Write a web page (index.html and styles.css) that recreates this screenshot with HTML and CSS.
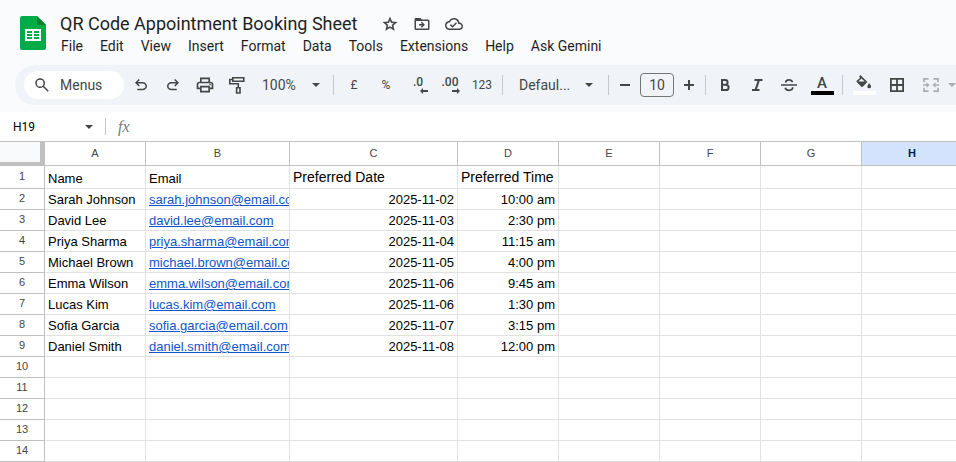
FILE: index.html
```html
<!DOCTYPE html>
<html lang="en">
<head>
    <meta charset="UTF-8">
    <meta name="viewport" content="width=device-width, initial-scale=1.0">
    <title>QR Code Appointment Booking Sheet</title>
    <link rel="stylesheet" href="styles.css">
</head>
<body>
    <header class="header">
        <svg class="logo" viewBox="0 0 26 34">
            <path fill="#00ac47" d="M2 0h15l9 9v23a2 2 0 0 1-2 2H2a2 2 0 0 1-2-2V2a2 2 0 0 1 2-2z"/>
            <path fill="#00832d" d="M17 0l9 9h-9z"/>
            <path fill="#fff" fill-rule="evenodd" d="M5 13h16v12H5zM7 15v2h5v-2zM14 15v2h5v-2zM7 18v2h5v-2zM14 18v2h5v-2zM7 21v2h5v-2zM14 21v2h5v-2z"/>
        </svg>
        <div class="header-text">
            <div class="title-row">
                <h1>QR Code Appointment Booking Sheet</h1>
                <button class="title-btn" aria-label="Star">
                    <svg viewBox="0 0 24 24"><path d="M8.900 16.800l3.100-1.900 3.100 1.900-.8-3.500 2.700-2.400-3.600-.3L12 7.200l-1.400 3.400-3.600.3 2.700 2.400zM5.800 21l1.600-7L2 9.200l7.200-.6L12 2l2.800 6.600 7.200.6-5.400 4.800 1.600 7-6.200-3.700z"/></svg>
                </button>
                <button class="title-btn" aria-label="Move">
                    <svg viewBox="0 0 24 24"><path d="M4 20a2 2 0 0 1-2-2V6c0-1.100.9-2 2-2h6l2 2h8a2 2 0 0 1 2 2v10a2 2 0 0 1-2 2zM4 18h16V8H4zM11.800 17l-1.400-1.400L12 14H8v-2h4l-1.600-1.600L11.800 9l4 4z"/></svg>
                </button>
                <button class="title-btn" aria-label="See document status">
                    <svg viewBox="0 0 24 24"><path d="M19.350 10.040A7.490 7.490 0 0 0 12 4C9.110 4 6.600 5.640 5.350 8.040A5.994 5.994 0 0 0 0 14c0 3.310 2.690 6 6 6h13c2.760 0 5-2.240 5-5 0-2.640-2.050-4.780-4.650-4.960zM19 18H6c-2.210 0-4-1.790-4-4s1.790-4 4-4h.710C7.370 7.690 9.480 6 12 6c3.040 0 5.500 2.460 5.500 5.500v.5H19c1.660 0 3 1.340 3 3s-1.340 3-3 3zM10 14.200l-2.100-2.100-1.400 1.400L10 17l6-6-1.400-1.400z"/></svg>
                </button>
            </div>
            <nav class="menu">
                <button>File</button>
                <button>Edit</button>
                <button>View</button>
                <button>Insert</button>
                <button>Format</button>
                <button>Data</button>
                <button>Tools</button>
                <button>Extensions</button>
                <button>Help</button>
                <button>Ask Gemini</button>
            </nav>
        </div>
    </header>

    <div class="toolbar">
        <label class="search">
            <svg viewBox="0 0 24 24"><path d="M19.600 21l-6.300-6.300A6.500 6.500 0 1 1 14.700 13.300L21 19.600zM9.500 14a4.500 4.500 0 1 0 0-9 4.500 4.500 0 0 0 0 9z"/></svg>
            <input type="text" placeholder="Menus" aria-label="Menus">
        </label>
        <button class="tool" aria-label="Undo">
            <svg class="small" viewBox="0 0 24 24"><path d="M7 19v-2h7.100c1.050 0 1.960-.330 2.740-1 .770-.670 1.160-1.500 1.160-2.500s-.390-1.830-1.160-2.500c-.780-.670-1.690-1-2.740-1H7.800l2.600 2.600L9 14 4 9l5-5 1.400 1.400L7.800 8h6.300c1.620 0 3 .520 4.160 1.570S20 11.930 20 13.500s-.580 2.880-1.740 3.930S15.720 19 14.100 19z"/></svg>
        </button>
        <button class="tool" aria-label="Redo">
            <svg class="small" viewBox="0 0 24 24"><path transform="matrix(-1 0 0 1 24 0)" d="M7 19v-2h7.100c1.050 0 1.960-.330 2.740-1 .770-.670 1.160-1.500 1.160-2.500s-.390-1.830-1.160-2.500c-.780-.670-1.690-1-2.740-1H7.800l2.600 2.600L9 14 4 9l5-5 1.400 1.400L7.800 8h6.300c1.620 0 3 .520 4.160 1.570S20 11.930 20 13.500s-.580 2.880-1.740 3.930S15.720 19 14.100 19z"/></svg>
        </button>
        <button class="tool" aria-label="Print">
            <svg viewBox="0 0 24 24"><path d="M19 8h-1V3H6v5H5c-1.660 0-3 1.340-3 3v6h4v4h12v-4h4v-6c0-1.660-1.340-3-3-3zM8 5h8v3H8zM16 19H8v-4h8zM18 15v-2H6v2H4v-4c0-.550.450-1 1-1h14c.550 0 1 .450 1 1v4z"/><circle cx="18" cy="11.500" r="1"/></svg>
        </button>
        <button class="tool" aria-label="Paint format">
            <svg viewBox="0 0 20 20"><path fill="none" stroke="#444746" stroke-width="1.600" d="M5.800 2.800h11v3.400h-11zM5.800 4.500H2.800v4.300h8.500v4M9.600 12.800h3.400v5.200H9.600z"/></svg>
        </button>
        <div class="dropdown zoom">
            <select aria-label="Zoom"><option>100%</option></select>
            <svg viewBox="0 0 8 4"><path d="M0 0h8L4 4z"/></svg>
        </div>
        <span class="separator"></span>
        <button class="tool text" aria-label="Format as currency">£</button>
        <button class="tool text" aria-label="Format as percent">%</button>
        <button class="tool decimal" aria-label="Decrease decimal places">
            <span>.0</span>
            <svg viewBox="0 0 8 6"><path d="M0 3l3-3v2h5v2H3v2z"/></svg>
        </button>
        <button class="tool decimal" aria-label="Increase decimal places">
            <span>.00</span>
            <svg viewBox="0 0 8 6"><path d="M8 3L5 0v2H0v2h5v2z"/></svg>
        </button>
        <button class="tool text" aria-label="More formats">123</button>
        <span class="separator"></span>
        <div class="dropdown font">
            <select aria-label="Font"><option>Defaul...</option></select>
            <svg viewBox="0 0 8 4"><path d="M0 0h8L4 4z"/></svg>
        </div>
        <span class="separator"></span>
        <button class="tool step" aria-label="Decrease font size">
            <svg viewBox="0 0 20 20"><path d="M5 9h10v2H5z"/></svg>
        </button>
        <input class="font-size" type="text" value="10" aria-label="Font size">
        <button class="tool step" aria-label="Increase font size">
            <svg viewBox="0 0 20 20"><path d="M5 9h4V5h2v4h4v2h-4v4H9v-4H5z"/></svg>
        </button>
        <span class="separator"></span>
        <button class="tool" aria-label="Bold">
            <svg viewBox="0 0 20 20"><path fill="none" stroke="#444746" stroke-width="2" d="M6 5h3.200a2.400 2.400 0 0 1 0 4.800H6zM6 9.800h4a2.600 2.600 0 0 1 0 5.200H6z"/></svg>
        </button>
        <button class="tool" aria-label="Italic">
            <svg viewBox="0 0 20 20"><path d="M4 16v-2h2.800l2.700-8H6.500V4h8v2h-2.800L9 14h2.500v2z"/></svg>
        </button>
        <button class="tool" aria-label="Strikethrough">
            <svg viewBox="0 0 20 20"><path d="M1 9.200h16v1.500H1z"/><path fill="none" stroke="#444746" stroke-width="1.700" d="M12.500 7.200C12 5.600 10.800 4.800 9 4.800c-2 0-3.300 1-3.300 2.700M5.200 12.700c.5 1.700 1.900 2.600 3.800 2.600 2.200 0 3.700-1.100 3.700-3"/></svg>
        </button>
        <button class="tool color" aria-label="Text color">
            <span>A</span>
            <i class="swatch black"></i>
        </button>
        <span class="separator"></span>
        <button class="tool wide color" aria-label="Fill color">
            <svg viewBox="0 0 18 16"><path fill-rule="evenodd" d="M4.200 1.200L5.400 0l7 7-4.400 4.400a1.300 1.300 0 0 1-1.900 0L1.900 7.300a1.300 1.300 0 0 1 0-1.900L5 3zM6.500 3.500L3.400 6.600h6.300z"/><path d="M14.200 8.200s1.900 2 1.900 3.200a1.900 1.900 0 0 1-3.800 0c0-1.200 1.900-3.200 1.900-3.200z"/></svg>
            <i class="swatch"></i>
        </button>
        <button class="tool wide" aria-label="Borders">
            <svg viewBox="0 0 20 20"><path fill="none" stroke="#444746" stroke-width="1.800" d="M2.900 3.900h12.200v12.200H2.900zM9 3.900v12.200M2.900 10h12.200"/></svg>
        </button>
        <button class="tool" aria-label="Merge cells" disabled>
            <svg viewBox="0 0 20 20"><path fill="none" stroke="#444746" stroke-width="1.700" d="M7.500 3.800H3v3.400M12.500 3.800H17v3.400M7.500 16.200H3v-3.400M12.500 16.200H17v-3.400M2 10h5M18 10h-5"/><path d="M5.500 7.200L8.500 10l-3 2.800zM14.500 7.200l-3 2.800 3 2.800z"/></svg>
        </button>
        <button class="tool arrow" aria-label="Select merge type" disabled>
            <svg viewBox="0 0 8 4"><path d="M0 0h8L4 4z"/></svg>
        </button>
    </div>

    <div class="formula-bar">
        <input class="name-box" type="text" value="H19" aria-label="Name box">
        <svg class="name-arrow" viewBox="0 0 8 4"><path d="M0 0h8L4 4z"/></svg>
        <label class="fx" for="formula">fx</label>
        <input class="formula" type="text" id="formula">
    </div>

    <div class="grid">
        <table>
            <colgroup>
                <col class="col-num">
                <col class="col-cell">
                <col class="col-email">
                <col class="col-date">
                <col class="col-cell">
                <col class="col-cell">
                <col class="col-cell">
                <col class="col-cell">
                <col class="col-cell">
            </colgroup>
            <thead>
                <tr>
                    <td class="corner"></td>
                    <th>A</th>
                    <th>B</th>
                    <th>C</th>
                    <th>D</th>
                    <th>E</th>
                    <th>F</th>
                    <th>G</th>
                    <th class="selected">H</th>
                </tr>
            </thead>
            <tbody>
                <tr class="first">
                    <th>1</th><td>Name</td><td>Email</td><td class="heading">Preferred Date</td><td class="heading">Preferred Time</td><td></td><td></td><td></td><td></td>
                </tr>
                <tr>
                    <th>2</th><td>Sarah Johnson</td><td><a href="mailto:sarah.johnson@email.com">sarah.johnson@email.com</a></td><td class="right">2025-11-02</td><td class="right">10:00 am</td><td></td><td></td><td></td><td></td>
                </tr>
                <tr>
                    <th>3</th><td>David Lee</td><td><a href="mailto:david.lee@email.com">david.lee@email.com</a></td><td class="right">2025-11-03</td><td class="right">2:30 pm</td><td></td><td></td><td></td><td></td>
                </tr>
                <tr>
                    <th>4</th><td>Priya Sharma</td><td><a href="mailto:priya.sharma@email.com">priya.sharma@email.com</a></td><td class="right">2025-11-04</td><td class="right">11:15 am</td><td></td><td></td><td></td><td></td>
                </tr>
                <tr>
                    <th>5</th><td>Michael Brown</td><td><a href="mailto:michael.brown@email.com">michael.brown@email.com</a></td><td class="right">2025-11-05</td><td class="right">4:00 pm</td><td></td><td></td><td></td><td></td>
                </tr>
                <tr>
                    <th>6</th><td>Emma Wilson</td><td><a href="mailto:emma.wilson@email.com">emma.wilson@email.com</a></td><td class="right">2025-11-06</td><td class="right">9:45 am</td><td></td><td></td><td></td><td></td>
                </tr>
                <tr>
                    <th>7</th><td>Lucas Kim</td><td><a href="mailto:lucas.kim@email.com">lucas.kim@email.com</a></td><td class="right">2025-11-06</td><td class="right">1:30 pm</td><td></td><td></td><td></td><td></td>
                </tr>
                <tr>
                    <th>8</th><td>Sofia Garcia</td><td><a href="mailto:sofia.garcia@email.com">sofia.garcia@email.com</a></td><td class="right">2025-11-07</td><td class="right">3:15 pm</td><td></td><td></td><td></td><td></td>
                </tr>
                <tr>
                    <th>9</th><td>Daniel Smith</td><td><a href="mailto:daniel.smith@email.com">daniel.smith@email.com</a></td><td class="right">2025-11-08</td><td class="right">12:00 pm</td><td></td><td></td><td></td><td></td>
                </tr>
                <tr><th>10</th><td></td><td></td><td></td><td></td><td></td><td></td><td></td><td></td></tr>
                <tr><th>11</th><td></td><td></td><td></td><td></td><td></td><td></td><td></td><td></td></tr>
                <tr><th>12</th><td></td><td></td><td></td><td></td><td></td><td></td><td></td><td></td></tr>
                <tr><th>13</th><td></td><td></td><td></td><td></td><td></td><td></td><td></td><td></td></tr>
                <tr><th>14</th><td></td><td></td><td></td><td></td><td></td><td></td><td></td><td></td></tr>
            </tbody>
        </table>
    </div>
</body>
</html>
```

FILE: styles.css
```css
* {
    margin: 0;
    padding: 0;
    box-sizing: border-box;
}
body {
    background-color: #f9fbfd;
    font-family: Roboto, "Liberation Sans", sans-serif;
    color: #1f1f1f;
    overflow-x: hidden;
}
button, input, select {
    font-family: inherit;
    border: none;
    background: none;
    color: inherit;
}
button {
    cursor: pointer;
}
svg {
    display: block;
    fill: #444746;
}

/* header */
.header {
    display: flex;
    align-items: flex-start;
    gap: 14px;
    padding: 10px 20px;
}
.logo {
    width: 26px;
    height: 34px;
    margin-top: 6px;
}
.title-row {
    display: flex;
    align-items: center;
    height: 26px;
}
h1 {
    font-size: 18px;
    font-weight: 400;
    margin-right: 24px;
    white-space: nowrap;
}
.title-btn {
    width: 18px;
    margin-right: 14px;
    padding-top: 2px;
}
.title-btn svg {
    width: 18px;
    height: 18px;
}
.menu {
    display: flex;
    gap: 17px;
    height: 19px;
    padding-left: 1px;
}
.menu button {
    font-size: 14px;
    white-space: nowrap;
}

/* toolbar */
.toolbar {
    display: flex;
    align-items: center;
    height: 40px;
    margin-left: 15px;
    padding-left: 9px;
    background-color: #f0f4f9;
    border-radius: 20px 0 0 20px;
    color: #444746;
    overflow: hidden;
}
.toolbar > * {
    flex-shrink: 0;
}
.search {
    display: flex;
    align-items: center;
    gap: 9px;
    width: 100px;
    height: 28px;
    margin-right: 1px;
    padding-left: 9px;
    background-color: white;
    border-radius: 14px;
}
.search svg {
    flex-shrink: 0;
    width: 18px;
    height: 18px;
}
.search input {
    width: 56px;
    font-size: 14px;
}
.search input::placeholder {
    color: #444746;
}
.tool {
    display: flex;
    align-items: center;
    justify-content: center;
    width: 32px;
    height: 32px;
}
.tool svg {
    width: 20px;
    height: 20px;
}
.tool .small {
    width: 18px;
    height: 18px;
}
.tool.text {
    font-size: 12px;
}
.tool.wide {
    width: 34px;
}
.tool.step {
    width: 24px;
}
.tool:disabled {
    opacity: 0.4;
}
.dropdown {
    position: relative;
}
.dropdown select {
    appearance: none;
    width: 100%;
    height: 28px;
    font-size: 14px;
}
.dropdown svg {
    position: absolute;
    top: 12px;
    width: 8px;
    height: 4px;
    pointer-events: none;
}
.zoom {
    width: 76px;
    padding-left: 9px;
}
.zoom svg {
    right: 9px;
}
.font {
    width: 97px;
    padding-left: 12px;
}
.font svg {
    right: 11px;
}
.separator {
    width: 1px;
    height: 20px;
    margin: 0 4px;
    background-color: #c7c7c7;
}
.tool.decimal {
    flex-direction: column;
    font-size: 12px;
    font-weight: 500;
    line-height: 12px;
}
.tool.decimal svg {
    width: 8px;
    height: 6px;
    margin-left: 12px;
}
.font-size {
    width: 34px;
    height: 24px;
    margin: 0 3px;
    border: 1px solid #747775;
    border-radius: 4px;
    font-size: 14px;
    text-align: center;
}
.tool.color {
    flex-direction: column;
    font-size: 15px;
    font-weight: 500;
    line-height: 16px;
}
.tool.color svg {
    width: 18px;
    height: 16px;
}
.swatch {
    width: 23px;
    height: 4px;
    background-color: white;
}
.swatch.black {
    background-color: black;
}
.tool.arrow {
    width: 10px;
}
.tool.arrow svg {
    width: 8px;
    height: 4px;
}

/* formula bar */
.formula-bar {
    display: flex;
    align-items: center;
    height: 29px;
    margin-top: 7px;
    padding: 0 13px;
    background-color: white;
}
.name-box {
    width: 72px;
    font-size: 12px;
    color: black;
}
.name-arrow {
    width: 8px;
    height: 4px;
    margin-right: 12px;
}
.fx {
    height: 17px;
    padding-left: 12px;
    border-left: 1px solid #c7c7c7;
    font-family: "Liberation Serif", serif;
    font-size: 16px;
    font-style: italic;
    line-height: 17px;
    color: #777;
}
.formula {
    flex: 1;
    margin-left: 8px;
    font-size: 13px;
}

/* sheet */
.grid {
    overflow: hidden;
    background-color: white;
    border-top: 1px solid #c0c0c0;
    font-family: "Liberation Sans", Arial, sans-serif;
}
table {
    width: 100%;
    table-layout: fixed;
    border-collapse: separate;
    border-spacing: 0;
}
.col-num {
    width: 45px;
}
.col-cell {
    width: 101px;
}
.col-email {
    width: 144px;
}
.col-date {
    width: 168px;
}
th {
    padding-bottom: 2px;
    border-right: 1px solid #c0c0c0;
    border-bottom: 1px solid #c0c0c0;
    font-size: 11px;
    font-weight: 400;
    line-height: 12px;
    color: #444746;
}
thead th {
    height: 24px;
}
.corner {
    background-color: #f8f9fa;
    border-right: 5px solid #c0c0c0;
    border-bottom: 4px solid #c0c0c0;
}
.selected {
    background-color: #d3e3fd;
    color: #041e49;
    font-weight: bold;
}
tbody td {
    height: 21px;
    padding: 0 3px 1px;
    border-right: 1px solid #e1e1e1;
    border-bottom: 1px solid #e1e1e1;
    font-size: 13px;
    line-height: 16px;
    color: black;
    vertical-align: bottom;
    white-space: nowrap;
    overflow: hidden;
}
.first td {
    height: 23px;
}
tbody td:nth-child(3) {
    padding-right: 0;
}
tbody .heading {
    padding-right: 0;
    font-size: 14px;
    vertical-align: middle;
}
.right {
    text-align: right;
}
td a {
    color: #1155cc;
}
```
